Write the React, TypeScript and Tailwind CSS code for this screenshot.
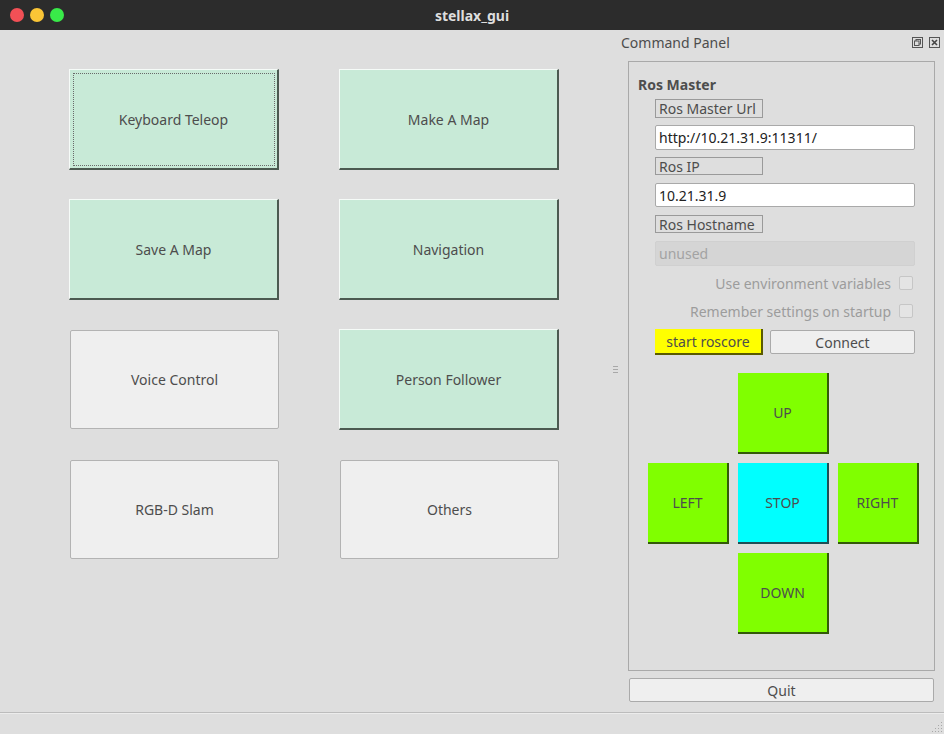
import React from "react";

const font = { fontFamily: '"Noto Sans", "Open Sans", sans-serif' };

function GreenBtn({ label, focus }: { label: string; focus?: boolean }) {
  return (
    <button
      className={
        "w-full h-full bg-[#c8ead7] border-t border-l border-t-[#f6fbf8] border-l-[#f6fbf8] border-b-2 border-r-2 border-b-[#4b5a50] border-r-[#4b5a50] text-[14px] text-[#4d4d4d] flex items-center justify-center " +
        (focus ? "outline-1 outline-dotted outline-[#6a6a6a] outline-offset-[-5px]" : "")
      }
    >
      {label}
    </button>
  );
}

function GrayBtn({ label }: { label: string }) {
  return (
    <div className="w-full h-full p-[1px] pr-0">
      <button className="w-full h-[99px] bg-[#efefef] border border-[#b3b3b3] rounded-[2px] text-[14px] text-[#4d4d4d] flex items-center justify-center">
        {label}
      </button>
    </div>
  );
}

function PadBtn({ label, cyan }: { label: string; cyan?: boolean }) {
  return (
    <button
      className={
        "w-full h-full border-b-2 border-r-2 text-[14px] text-[#4d4d4d] flex items-center justify-center " +
        (cyan ? "bg-[#00ffff] border-b-[#1f4f55] border-r-[#1f4f55]" : "bg-[#80ff00] border-b-[#335a08] border-r-[#335a08]")
      }
    >
      {label}
    </button>
  );
}

function BoxLabel({ text }: { text: string }) {
  return (
    <div className="ml-[26px] w-[108px] border border-[#9a9a9a] text-[14px] text-[#4d4d4d] leading-[17px] pl-[3px] h-full flex items-center">
      {text}
    </div>
  );
}

export default function App() {
  return (
    <div className="w-[944px] h-[734px] flex flex-col bg-[#dedede] overflow-hidden" style={font}>
      {/* Title bar */}
      <div className="h-[30px] bg-[#2c2c2c] relative flex items-center justify-center shrink-0">
        <div className="absolute left-[10px] top-[8px] flex gap-[6px]">
          <div className="w-[14px] h-[14px] rounded-full bg-[#f25056]" />
          <div className="w-[14px] h-[14px] rounded-full bg-[#fac536]" />
          <div className="w-[14px] h-[14px] rounded-full bg-[#39ea49]" />
        </div>
        <span className="text-[14px] font-bold text-[#dedede]">stellax_gui</span>
      </div>

      {/* Main */}
      <div className="flex flex-1 min-h-0">
        {/* Left grid */}
        <div className="w-[612px] pl-[69px] pt-[39px]">
          <div className="grid grid-cols-[210px_220px] auto-rows-[101px] gap-x-[60px] gap-y-[29px]">
            <GreenBtn label="Keyboard Teleop" focus />
            <GreenBtn label="Make A Map" />
            <GreenBtn label="Save A Map" />
            <GreenBtn label="Navigation" />
            <GrayBtn label="Voice Control" />
            <GreenBtn label="Person Follower" />
            <GrayBtn label="RGB-D Slam" />
            <GrayBtn label="Others" />
          </div>
        </div>

        {/* Splitter */}
        <div className="w-[6px] flex flex-col items-start justify-center pl-[1px]">
          <div className="flex flex-col gap-[2px] mb-[4px]">
            <div className="w-[5px] h-[1px] bg-[#a8a8a8]" />
            <div className="w-[5px] h-[1px] bg-[#a8a8a8]" />
            <div className="w-[5px] h-[1px] bg-[#a8a8a8]" />
          </div>
        </div>

        {/* Dock */}
        <div className="flex-1 flex flex-col">
          <div className="h-[26px] flex items-center justify-between pl-[3px] pr-[4px] pb-[1px]">
            <span className="text-[14px] text-[#4d4d4d]">Command Panel</span>
            <div className="flex gap-[6px] items-center">
              <svg width="11" height="11" viewBox="0 0 11 11">
                <rect x="0.5" y="0.5" width="10" height="10" fill="none" stroke="#555" />
                <rect x="4" y="2.5" width="4.5" height="4.5" fill="none" stroke="#555" />
                <rect x="2.5" y="4" width="4.5" height="4.5" fill="#dedede" stroke="#555" />
              </svg>
              <svg width="11" height="11" viewBox="0 0 11 11">
                <rect x="0.5" y="0.5" width="10" height="10" fill="none" stroke="#555" />
                <path d="M3 3 L8 8 M8 3 L3 8" stroke="#444" strokeWidth="1.6" />
              </svg>
            </div>
          </div>

          {/* Group box */}
          <div className="ml-[10px] mr-[9px] mt-[5px] h-[610px] border border-[#a9a9a9] flex flex-col">
            <div className="mt-[13px] h-[20px] pl-[9px] text-[14px] font-bold text-[#4d4d4d] leading-[20px]">Ros Master</div>
            <div className="mt-[4px] h-[19px]"><BoxLabel text="Ros Master Url" /></div>
            <div className="mt-[7px] ml-[26px] w-[260px] h-[25px] bg-white border border-[#a9a9a9] rounded-[2px] px-[3px] text-[14px] text-[#222] flex items-center">
              http://10.21.31.9:11311/
            </div>
            <div className="mt-[7px] h-[18px]"><BoxLabel text="Ros IP" /></div>
            <div className="mt-[8px] ml-[26px] w-[260px] h-[24px] bg-white border border-[#a9a9a9] rounded-[2px] px-[3px] text-[14px] text-[#222] flex items-center">
              10.21.31.9
            </div>
            <div className="mt-[8px] h-[18px]"><BoxLabel text="Ros Hostname" /></div>
            <div className="mt-[8px] ml-[26px] w-[260px] h-[25px] bg-[#d5d5d5] border border-[#d0d0d0] rounded-[2px] px-[3px] text-[14px] text-[#a3a3a3] flex items-center">
              unused
            </div>
            <div className="mt-[7px] h-[20px] flex items-center justify-end pr-[21px] gap-[8px]">
              <span className="text-[14px] text-[#9c9c9c]">Use environment variables</span>
              <div className="w-[14px] h-[14px] border border-[#c6c6c6] bg-[#e4e4e4] rounded-[2px]" />
            </div>
            <div className="mt-[8px] h-[20px] flex items-center justify-end pr-[21px] gap-[8px]">
              <span className="text-[14px] text-[#9c9c9c]">Remember settings on startup</span>
              <div className="w-[14px] h-[14px] border border-[#c6c6c6] bg-[#e4e4e4] rounded-[2px]" />
            </div>
            <div className="mt-[8px] h-[26px] ml-[26px] flex items-center gap-[7px]">
              <button className="w-[108px] h-[26px] bg-[#ffff00] border-b-2 border-r-2 border-b-[#5a5a00] border-r-[#5a5a00] text-[14px] text-[#4d4d4d] flex items-center justify-center">
                start roscore
              </button>
              <button className="w-[145px] h-[24px] bg-[#efefef] border border-[#aaaaaa] rounded-[2px] text-[14px] text-[#4d4d4d] flex items-center justify-center">
                Connect
              </button>
            </div>
            <div className="mt-[18px] ml-[19px] grid grid-cols-[81px_91px_81px] grid-rows-[81px_81px_81px] gap-x-[9px] gap-y-[9px]">
              <div />
              <PadBtn label="UP" />
              <div />
              <PadBtn label="LEFT" />
              <PadBtn label="STOP" cyan />
              <PadBtn label="RIGHT" />
              <div />
              <PadBtn label="DOWN" />
              <div />
            </div>
          </div>

          <button className="mt-[7px] ml-[11px] mr-[10px] h-[24px] bg-[#efefef] border border-[#aaaaaa] rounded-[2px] text-[14px] text-[#4d4d4d] flex items-center justify-center">
            Quit
          </button>
        </div>
      </div>

      {/* Status bar */}
      <div className="h-[22px] shrink-0 border-t border-t-[#bcbcbc] relative">
        <div className="h-[1px] bg-[#ececec]" />
        <svg className="absolute right-[1px] bottom-[1px]" width="12" height="12" viewBox="0 0 12 12">
          {[
            [10, 2], [10, 5], [7, 5], [10, 8], [7, 8], [4, 8], [10, 11], [7, 11], [4, 11], [1, 11],
          ].map(([x, y], i) => (
            <rect key={i} x={x} y={y - 1} width="1" height="1" fill="#a8a8a8" />
          ))}
        </svg>
      </div>
    </div>
  );
}
